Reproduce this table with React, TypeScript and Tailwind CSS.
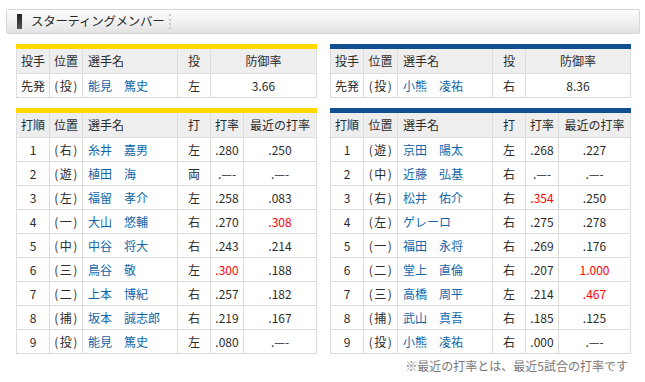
import React from "react";

type Cell = { t: string; c?: "name" | "red"; a?: "l" | "c"; p?: boolean };

const BORDER = "border-[#dcdcdc]";

function Table({
  bar,
  cols,
  head,
  rows,
}: {
  bar: string;
  cols: string;
  head: Cell[];
  rows: Cell[][];
}) {
  return (
    <div className="w-[301px]">
      <div className={`h-[5px] w-full ${bar}`} />
      <div className={`grid ${cols} border-l ${BORDER}`}>
        {head.map((h, i) => (
          <div
            key={"h" + i}
            className={`h-[25px] border-r border-b ${BORDER} bg-[#eeeeee] flex items-center ${
              h.a === "l" ? "justify-start pl-[5px]" : "justify-center"
            } whitespace-nowrap`}
          >
            {h.t}
          </div>
        ))}
        {rows.map((r, ri) =>
          r.map((c, ci) => (
            <div
              key={ri + "-" + ci}
              className={`h-[24px] border-r border-b ${BORDER} flex items-center whitespace-nowrap overflow-hidden ${
                c.a === "l" ? "justify-start pl-[5px]" : "justify-center"
              } ${c.c === "name" ? "text-[#1166aa]" : c.c === "red" ? "text-[#ff0000]" : ""} ${
                c.p ? "tracking-[1.5px] pl-[1px]" : ""
              }`}
            >
              {c.t}
            </div>
          ))
        )}
      </div>
    </div>
  );
}

const pitchHead: Cell[] = [
  { t: "投手" },
  { t: "位置" },
  { t: "選手名", a: "l" },
  { t: "投" },
  { t: "防御率" },
];
const lineHead: Cell[] = [
  { t: "打順" },
  { t: "位置" },
  { t: "選手名", a: "l" },
  { t: "打" },
  { t: "打率" },
  { t: "最近の打率" },
];

function pos(p: string): Cell {
  return { t: "(" + p + ")", p: true };
}

type L = [string, string, string, string, string, string, string?];

const D = ".—-";

function lineRows(data: L[]): Cell[][] {
  return data.map(([n, p, name, h, avg, rec, red]) => [
    { t: n },
    pos(p),
    { t: name, c: "name", a: "l" },
    { t: h },
    { t: avg, c: red === "a" ? "red" : undefined },
    { t: rec, c: red === "r" ? "red" : undefined },
  ]);
}

const leftLine: L[] = [
  ["1", "右", "糸井　嘉男", "左", ".280", ".250"],
  ["2", "遊", "植田　海", "両", D, D],
  ["3", "左", "福留　孝介", "左", ".258", ".083"],
  ["4", "一", "大山　悠輔", "右", ".270", ".308", "r"],
  ["5", "中", "中谷　将大", "右", ".243", ".214"],
  ["6", "三", "鳥谷　敬", "左", ".300", ".188", "a"],
  ["7", "二", "上本　博紀", "右", ".257", ".182"],
  ["8", "捕", "坂本　誠志郎", "右", ".219", ".167"],
  ["9", "投", "能見　篤史", "左", ".080", D],
];

const rightLine: L[] = [
  ["1", "遊", "京田　陽太", "左", ".268", ".227"],
  ["2", "中", "近藤　弘基", "右", D, D],
  ["3", "右", "松井　佑介", "右", ".354", ".250", "a"],
  ["4", "左", "ゲレーロ", "右", ".275", ".278"],
  ["5", "一", "福田　永将", "右", ".269", ".176"],
  ["6", "二", "堂上　直倫", "右", ".207", "1.000", "r"],
  ["7", "三", "高橋　周平", "左", ".214", ".467", "r"],
  ["8", "捕", "武山　真吾", "右", ".185", ".125"],
  ["9", "投", "小熊　凌祐", "右", ".000", D],
];

export default function App() {
  return (
    <div className="w-[645px] h-[382px] bg-white text-[12px] leading-none text-[#2b2b2b] font-['Noto_Sans_CJK_JP','Noto_Sans',sans-serif] overflow-hidden">
      <div className="pt-[9px] pl-[6px]">
        <div className="w-[634px] h-[25px] rounded-[2px] border border-[#d6d6d6] bg-gradient-to-b from-[#fdfdfd] via-[#f1f1f1] to-[#e3e3e3] shadow-[inset_0_1px_0_#ffffff] flex items-center pl-[10px]">
          <div className="w-[5px] h-[15px] bg-gradient-to-b from-[#222222] to-[#555555]" />
          <div className="ml-[9px] text-[12.5px] text-[#2b2b2b] tracking-[-0.3px]">
            スターティングメンバー
          </div>
          <div className="ml-[5px] h-[15px] border-l-2 border-dotted border-[#c8c8c8]" />
        </div>
      </div>
      <div className="flex pl-[16px] gap-[13px] mt-[10px]">
        <div className="flex flex-col">
          <Table
            bar="bg-[#ffd900]"
            cols="grid-cols-[33px_33px_95px_33px_106px]"
            head={pitchHead}
            rows={[
              [
                { t: "先発" },
                pos("投"),
                { t: "能見　篤史", c: "name", a: "l" },
                { t: "左" },
                { t: "3.66" },
              ],
            ]}
          />
          <div className="mt-[10px]">
            <Table
              bar="bg-[#ffd900]"
              cols="grid-cols-[33px_33px_95px_33px_33px_73px]"
              head={lineHead}
              rows={lineRows(leftLine)}
            />
          </div>
        </div>
        <div className="flex flex-col">
          <Table
            bar="bg-[#0f4f8f]"
            cols="grid-cols-[33px_34px_95px_33px_105px]"
            head={pitchHead}
            rows={[
              [
                { t: "先発" },
                pos("投"),
                { t: "小熊　凌祐", c: "name", a: "l" },
                { t: "右" },
                { t: "8.36" },
              ],
            ]}
          />
          <div className="mt-[10px]">
            <Table
              bar="bg-[#0f4f8f]"
              cols="grid-cols-[33px_34px_95px_33px_33px_72px]"
              head={lineHead}
              rows={lineRows(rightLine)}
            />
          </div>
          <div className="mt-[5px] pr-[3px] text-right text-[#777777] leading-[14px]">
            ※最近の打率とは、最近5試合の打率です
          </div>
        </div>
      </div>
    </div>
  );
}
